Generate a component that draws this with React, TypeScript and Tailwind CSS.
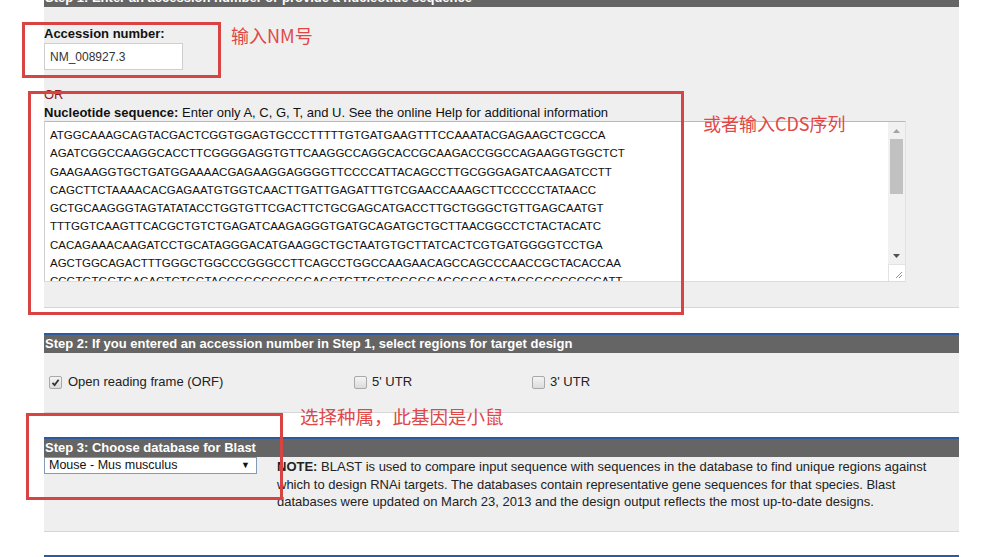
import React from 'react';

const seq = [
  'ATGGCAAAGCAGTACGACTCGGTGGAGTGCCCTTTTTGTGATGAAGTTTCCAAATACGAGAAGCTCGCCA',
  'AGATCGGCCAAGGCACCTTCGGGGAGGTGTTCAAGGCCAGGCACCGCAAGACCGGCCAGAAGGTGGCTCT',
  'GAAGAAGGTGCTGATGGAAAACGAGAAGGAGGGGTTCCCCATTACAGCCTTGCGGGAGATCAAGATCCTT',
  'CAGCTTCTAAAACACGAGAATGTGGTCAACTTGATTGAGATTTGTCGAACCAAAGCTTCCCCCTATAACC',
  'GCTGCAAGGGTAGTATATACCTGGTGTTCGACTTCTGCGAGCATGACCTTGCTGGGCTGTTGAGCAATGT',
  'TTTGGTCAAGTTCACGCTGTCTGAGATCAAGAGGGTGATGCAGATGCTGCTTAACGGCCTCTACTACATC',
  'CACAGAAACAAGATCCTGCATAGGGACATGAAGGCTGCTAATGTGCTTATCACTCGTGATGGGGTCCTGA',
  'AGCTGGCAGACTTTGGGCTGGCCCGGGCCTTCAGCCTGGCCAAGAACAGCCAGCCCAACCGCTACACCAA',
  'CCGTGTGGTGACACTCTGGTACCGGCCCCCGGAGCTGTTGCTCGGGGAGCGGGACTACGGCCCCCCCATT',
];

function Checkbox({ checked }: { checked?: boolean }) {
  return (
    <span className="inline-flex h-[13px] w-[13px] items-center justify-center rounded-[2px] border border-[#a9a9a9] bg-gradient-to-b from-[#f4f4f4] to-[#dcdcdc]">
      {checked && (
        <svg width="9" height="9" viewBox="0 0 9 9">
          <path d="M1.5 4.8 L3.6 7 L7.6 1.8" fill="none" stroke="#333" strokeWidth="1.8" />
        </svg>
      )}
    </span>
  );
}

function Header({ children, className = '' }: { children: React.ReactNode; className?: string }) {
  return (
    <div className={`bg-[#656565] px-px text-[13px] font-bold leading-[18px] text-white ${className}`}>
      {children}
    </div>
  );
}

export default function App() {
  return (
    <div className="relative h-[557px] w-[1002px] overflow-hidden bg-white font-['Liberation_Sans',Arial,sans-serif] text-[13px] text-[#222]">
      <div className="ml-[44px] w-[915px]">
        {/* step 1 */}
        <Header className="-mt-[11px]">Step 1: Enter an accession number or provide a nucleotide sequence</Header>
        <div className="border-b border-[#d6d6d6] bg-[#efefef] pb-[25px] pt-[20px]">
          <div className="font-bold leading-[14px] text-[#111]">Accession number:</div>
          <div className="mt-[2px] flex h-[27px] w-[139px] items-center border border-[#cfcfcf] bg-white pl-[5px] text-[12px] text-[#333]">
            NM_008927.3
          </div>
          <div className="mt-[18px] leading-[14px] text-[#8f1a1a]">OR</div>
          <div className="mt-[4px] leading-[14px] text-[#111]">
            <span className="font-bold">Nucleotide sequence:</span> Enter only A, C, G, T, and U. See the online Help for additional information
          </div>
          <div className="mt-px flex h-[161px] w-[862px] border-l border-t border-r border-b border-l-[#d0d0d0] border-t-[#b9b9b9] border-r-[#e2e2e2] border-b-[#dcdcdc] bg-white">
            <div className="flex-1 overflow-hidden pl-[5px] pt-[4px] text-[11.5px] text-[#111]">
              {seq.map((s) => (
                <div key={s} className="whitespace-nowrap leading-[18.3px]">{s}</div>
              ))}
            </div>
            <div className="flex w-[17px] flex-col bg-[#f1f1f1]">
              <div className="flex h-[17px] items-center justify-center">
                <svg width="7" height="4" viewBox="0 0 7 4"><path d="M0 4 L3.5 0 L7 4 Z" fill="#a3a3a3" /></svg>
              </div>
              <div className="mx-[2px] h-[55px] bg-[#c1c1c1]" />
              <div className="flex-1" />
              <div className="flex h-[17px] items-center justify-center">
                <svg width="7" height="4" viewBox="0 0 7 4"><path d="M0 0 L7 0 L3.5 4 Z" fill="#505050" /></svg>
              </div>
              <div className="flex h-[17px] items-end justify-end border-l border-t border-[#e3e3e3] bg-white pb-[2px] pr-[2px]">
                <svg width="8" height="8" viewBox="0 0 8 8">
                  <path d="M1 7 L7 1 M4 7 L7 4" stroke="#8a8a8a" strokeWidth="0.9" />
                </svg>
              </div>
            </div>
          </div>
        </div>

        {/* step 2 */}
        <div className="mt-[25px] border-t-2 border-[#2c5aa0]">
          <Header>Step 2: If you entered an accession number in Step 1, select regions for target design</Header>
          <div className="flex h-[60px] items-center border-b border-[#d6d6d6] bg-[#efefef] pb-px pl-[5px] text-[#222]">
            <div className="flex w-[305px] items-center gap-[6px]">
              <Checkbox checked />
              <span>Open reading frame (ORF)</span>
            </div>
            <div className="flex w-[178px] items-center gap-[5px]">
              <Checkbox />
              <span>5' UTR</span>
            </div>
            <div className="flex items-center gap-[5px]">
              <Checkbox />
              <span>3' UTR</span>
            </div>
          </div>
        </div>

        {/* step 3 */}
        <div className="mt-[24px] border-t-2 border-[#2c5aa0]">
          <Header>Step 3: Choose database for Blast</Header>
          <div className="flex h-[75px] border-b border-[#d6d6d6] bg-[#efefef]">
            <div className="flex h-[17px] w-[213px] shrink-0 items-center justify-between border border-[#7f9db9] bg-white pl-[4px] pr-[6px] text-[12.5px] text-[#111]">
              <span>Mouse - Mus musculus</span>
              <span className="text-[9px]">▼</span>
            </div>
            <p className="ml-[20px] whitespace-nowrap pt-px leading-[17.6px] text-[#222]">
              <span className="font-bold">NOTE:</span> BLAST is used to compare input sequence with sequences in the database to find unique regions against
              <br />
              which to design RNAi targets. The databases contain representative gene sequences for that species. Blast
              <br />
              databases were updated on March 23, 2013 and the design output reflects the most up-to-date designs.
            </p>
          </div>
        </div>
        <div className="mt-[23px] border-t-2 border-[#2c5aa0]" />
      </div>

      {/* annotations */}
      <div className="absolute left-[22px] top-[22px] h-[56px] w-[199px] border-[3px] border-[#d84444]" />
      <div className="absolute left-[231px] top-[24px] font-['Noto_Sans_CJK_SC',sans-serif] text-[18px] leading-[22px] text-[#e04848]">输入NM号</div>
      <div className="absolute left-[28px] top-[91px] h-[224px] w-[656px] border-[3px] border-[#d84444]" />
      <div className="absolute left-[703px] top-[112px] font-['Noto_Sans_CJK_SC',sans-serif] text-[18px] leading-[22px] text-[#e04848]">或者输入CDS序列</div>
      <div className="absolute left-[26px] top-[413px] h-[87px] w-[257px] border-[3px] border-[#d84444]" />
      <div className="absolute left-[300px] top-[405px] font-['Noto_Sans_CJK_SC',sans-serif] text-[18.5px] leading-[22px] text-[#e04848]">选择种属，此基因是小鼠</div>
    </div>
  );
}
